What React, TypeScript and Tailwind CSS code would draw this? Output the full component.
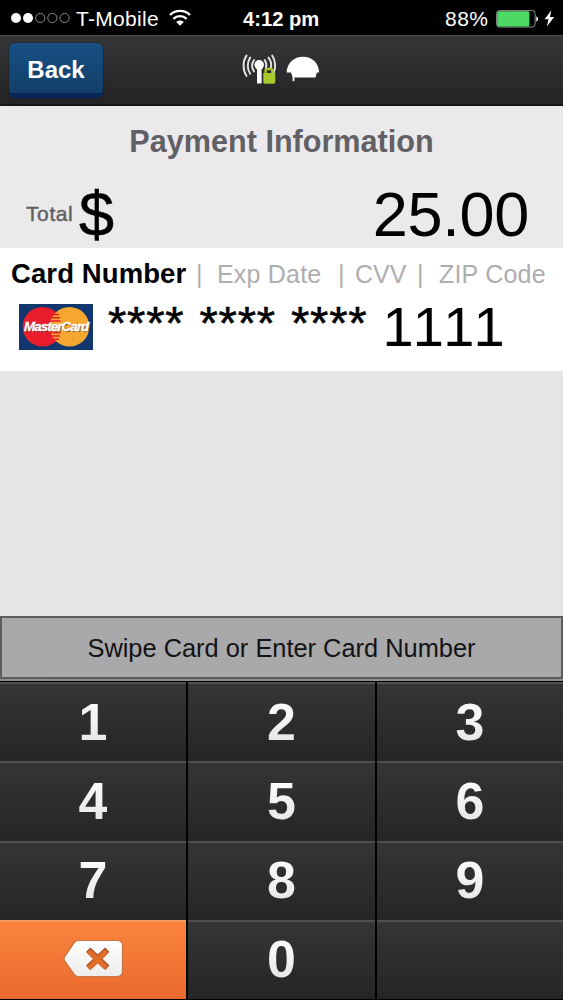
import type { ReactNode } from "react";

type Key = { id: string; label?: string; kind: "digit" | "delete" | "blank" };

const ROWS: Key[][] = [
  [
    { id: "1", label: "1", kind: "digit" },
    { id: "2", label: "2", kind: "digit" },
    { id: "3", label: "3", kind: "digit" },
  ],
  [
    { id: "4", label: "4", kind: "digit" },
    { id: "5", label: "5", kind: "digit" },
    { id: "6", label: "6", kind: "digit" },
  ],
  [
    { id: "7", label: "7", kind: "digit" },
    { id: "8", label: "8", kind: "digit" },
    { id: "9", label: "9", kind: "digit" },
  ],
  [
    { id: "del", kind: "delete" },
    { id: "0", label: "0", kind: "digit" },
    { id: "blank", kind: "blank" },
  ],
];

// ── Icons ─────────────────────────────────
function SignalDots() {
  return (
    <svg width="62" height="14" viewBox="0 0 62 14" className="block">
      <circle cx="6" cy="7" r="5" fill="#fff" />
      <circle cx="18" cy="7" r="5" fill="#fff" />
      <circle cx="30.3" cy="7" r="4.6" fill="none" stroke="#8a8a8a" strokeWidth="1" />
      <circle cx="42.4" cy="7" r="4.6" fill="none" stroke="#8a8a8a" strokeWidth="1" />
      <circle cx="54.6" cy="7" r="4.6" fill="none" stroke="#8a8a8a" strokeWidth="1" />
    </svg>
  );
}

function WifiIcon() {
  return (
    <svg width="22" height="17" viewBox="0 0 22 17" className="block">
      <path d="M1 6C6.5 .6 15.5 .6 21 6" fill="none" stroke="#fff" strokeWidth="2.3" />
      <path d="M4.4 9.9C8 6.3 14 6.3 17.6 9.9" fill="none" stroke="#fff" strokeWidth="2.3" />
      <path d="M7.2 12.9C9.2 10.9 12.8 10.9 14.8 12.9L11 16.7Z" fill="#fff" />
    </svg>
  );
}

function BatteryIcon() {
  return (
    <svg width="44" height="18" viewBox="0 0 44 18" className="block">
      <rect x=".6" y=".6" width="38.5" height="16.4" rx="2.8" fill="none" stroke="#8f8f8f" strokeWidth="1" />
      <rect x="1.2" y="1.2" width="32.2" height="15.2" rx="1.5" fill="#4cd964" />
      <path d="M40.3 6.4C42.6 6.6 42.6 11.2 40.3 11.4Z" fill="#fff" />
    </svg>
  );
}

function BoltIcon() {
  return (
    <svg width="11" height="17" viewBox="0 0 11 17" className="block">
      <path d="M7.3 .3L.6 9.3H4.6L2.8 16.6L10.2 7H6Z" fill="#fff" />
    </svg>
  );
}

function SecureSignalIcon() {
  return (
    <svg width="36" height="32" viewBox="0 0 36 32" className="block">
      <g fill="none" stroke="#e6e6e6" strokeWidth="1.9" strokeLinecap="round">
        <path d="M4.5 1.6C.6 7 .6 16 4.5 22" />
        <path d="M8.2 3.6C5 8.4 5 15 8.2 19.8" />
        <path d="M12 6C9.6 9.6 9.6 13.8 12 17.4" />
        <path d="M30.2 1.6C33.6 6.4 34 14 31.4 19.6" />
        <path d="M26.5 3.6C29.3 7.6 29.7 11.6 28.6 14" />
        <path d="M22.7 6C24.4 8.6 24.7 11.6 24 14" />
      </g>
      <circle cx="17.2" cy="10.8" r="4.8" fill="#fff" />
      <rect x="15" y="12" width="4.6" height="17.5" rx=".6" fill="#fff" />
      <path
        d="M23.6 20V16.5Q23.6 15 25.1 15H28.9Q30.4 15 30.4 16.5V20"
        fill="none"
        stroke="#a9c92e"
        strokeWidth="2.4"
      />
      <path d="M21.3 19H33.3V28Q33.3 29.8 31.5 29.8H23.1Q21.3 29.8 21.3 28Z" fill="#a9c92e" />
    </svg>
  );
}

function ReaderIcon() {
  return (
    <svg width="34" height="27" viewBox="0 0 34 27" className="block">
      <path
        d="M.6 16.5C1.100 7 8 .8 17 .8S32.800 7 33.200 16.500H30.800L29.600 21.400H8.400V25.300H6.600V21.200L5 16.500Z"
        fill="#fff"
      />
    </svg>
  );
}

function MasterCardLogo() {
  return (
    <div className="relative h-[46px] w-[74px]">
      <svg width="74" height="46" viewBox="0 0 74 46" className="block">
        <rect width="74" height="46" fill="#12376f" />
        <circle cx="23.5" cy="22.8" r="19.8" fill="#ea1d2c" />
        <circle cx="50.5" cy="22.8" r="19.8" fill="#f6a72f" />
        <path
          d="M33.500 10.500H40M32.500 13.700H41M31.500 16.900H41.500M31 28.800H41.500M32 32H41M34 35.200H40"
          stroke="#ea1d2c"
          strokeWidth="1.5"
        />
      </svg>
      <span className="absolute left-[5px] top-[15px] whitespace-nowrap text-[13.5px] font-bold italic leading-[16px] tracking-[-1px] text-white [-webkit-text-stroke:0.3px_#fff] [text-shadow:1px_1px_0_#4a203099]">
        MasterCard
      </span>
    </div>
  );
}

function DeleteIcon() {
  return (
    <svg width="62" height="42" viewBox="0 0 62 42" className="block">
      <defs>
        <linearGradient id="del" x1="0" y1="0" x2="0" y2="1">
          <stop offset="0" stopColor="#fff" />
          <stop offset="1" stopColor="#ececec" />
        </linearGradient>
      </defs>
      <path
        d="M16.5 2.5H55Q60.500 2.500 60.500 8V33Q60.500 38.500 55 38.500H16.500Q14 38.500 12.400 36.500L2.600 22.600Q1.400 20.800 2.600 19L12.400 4.500Q14 2.500 16.500 2.500Z"
        fill="url(#del)"
        stroke="#b5622f"
        strokeOpacity=".75"
        strokeWidth="1.2"
      />
      <path d="M28.4 13.8L43 27.6M43 13.8L28.4 27.6" stroke="#a8501e" strokeWidth="6.2" strokeLinecap="square" />
      <path d="M28.4 14.8L43 28.6M43 14.8L28.4 28.6" stroke="#e06c2c" strokeWidth="5.4" strokeLinecap="round" />
    </svg>
  );
}

// ── Sections ──────────────────────────────
function StatusBar() {
  return (
    <div className="flex h-[35px] items-start bg-black leading-none text-white">
      <div className="ml-[10px] mt-[11px]">
        <SignalDots />
      </div>
      <span className="ml-[4px] mt-[8px] w-[93px] text-[21px] tracking-[0.3px]">T-Mobile</span>
      <div className="mt-[9px]">
        <WifiIcon />
      </div>
      <span className="ml-[52px] mt-[9px] w-[202px] text-[20.2px] font-bold">4:12 pm</span>
      <span className="mt-[8px] w-[51px] text-[21px] tracking-[0.5px]">88%</span>
      <div className="mt-[10px]">
        <BatteryIcon />
      </div>
      <div className="ml-[4px] mt-[10px]">
        <BoltIcon />
      </div>
    </div>
  );
}

function NavBar() {
  return (
    <div className="flex h-[71px] items-start border-t border-b-2 border-t-[#4c4a4d] border-b-[#151416] bg-linear-to-b from-[#363537] to-[#242325]">
      <button className="ml-[9px] mt-[7px] flex h-[55px] w-[94px] justify-center rounded-[6px] border-b-[5px] border-[#07265a] bg-linear-to-b from-[#174f85] to-[#123f68] pt-[15px] text-[24px] font-bold leading-none text-white shadow-[0_0_2px_#101012]">
        Back
      </button>
      <div className="ml-[139px] mt-[18px]">
        <SecureSignalIcon />
      </div>
      <div className="ml-[8px] mt-[20px]">
        <ReaderIcon />
      </div>
    </div>
  );
}

function Total() {
  return (
    <div className="h-[142px] pt-[20px] leading-none">
      <h1 className="text-center text-[30.6px] font-bold leading-[31px] text-[#616064]">Payment Information</h1>
      <div className="mt-[26px] flex items-start text-black">
        <span className="ml-[26px] mt-[20px] w-[53px] text-[21px] tracking-[0.6px] text-[#5e5d60] [-webkit-text-stroke:0.4px_#5e5d60]">
          Total
        </span>
        <span className="text-[63px] [-webkit-text-stroke:0.5px_#000]">$</span>
        <span className="ml-auto mr-[34px] text-[63px] tracking-[-0.3px]">25.00</span>
      </div>
    </div>
  );
}

function Tab({ className, children }: { className: string; children: ReactNode }) {
  return <span className={"whitespace-nowrap text-[25px] text-[#aeadb0] " + className}>{children}</span>;
}

function Group({ children }: { children: ReactNode }) {
  return (
    <span className="w-[91.5px] text-[47px] tracking-[0.8px] [-webkit-text-stroke:0.6px_#000]">
      {children}
    </span>
  );
}

function CardEntry() {
  return (
    <div className="h-[123px] bg-white leading-none">
      <div className="flex items-baseline pt-[12px]">
        <span className="ml-[11px] w-[185px] whitespace-nowrap text-[27.5px] font-bold tracking-[0.1px] text-black">
          Card Number
        </span>
        <Tab className="w-[21px]">|</Tab>
        <Tab className="w-[121px] tracking-[0.2px]">Exp Date</Tab>
        <Tab className="w-[17px]">|</Tab>
        <Tab className="w-[62px]">CVV</Tab>
        <Tab className="w-[22px]">|</Tab>
        <Tab className="tracking-[0.2px]">ZIP Code</Tab>
      </div>
      <div className="mt-[11px] flex items-start text-black">
        <div className="ml-[19px] mt-[5px]">
          <MasterCardLogo />
        </div>
        <div className="ml-[15px] flex">
          <Group>****</Group>
          <Group>****</Group>
          <Group>****</Group>
        </div>
        <span className="text-[56px] tracking-[-0.8px] [font-kerning:none]">1111</span>
      </div>
    </div>
  );
}

function Keypad() {
  return (
    <div className="flex h-[319px] flex-col border-y border-black bg-black">
      {ROWS.map((row) => (
        <div key={row[0].id} className="grid flex-1 grid-cols-[186px_187px_1fr] gap-x-[2px]">
          {row.map((key) => (
            <button
              key={key.id}
              className={
                "flex items-center justify-center border-t-2 pb-[2px] text-[52px] font-bold leading-none " +
                (key.kind === "delete"
                  ? "border-[#f79a5d] bg-linear-to-b from-[#fa833d] to-[#ea6a2d]"
                  : "border-[#504f52] bg-linear-to-b from-[#353436] to-[#252426]")
              }
            >
              {key.kind === "delete" ? (
                <DeleteIcon />
              ) : (
                <span className="bg-linear-to-b from-white to-[#e4e2e6] bg-clip-text text-transparent">
                  {key.label}
                </span>
              )}
            </button>
          ))}
        </div>
      ))}
    </div>
  );
}

export default function App() {
  return (
    <div className="flex h-[1000px] w-[563px] flex-col overflow-hidden bg-linear-to-r from-[#e9ece8] to-[#ebe9ec] to-[48px] font-['Liberation_Sans',Arial,sans-serif]">
      <StatusBar />
      <NavBar />
      <Total />
      <CardEntry />
      <div className="flex-1 bg-linear-to-r from-[#e5e7e4] to-[#e6e4e7] to-[48px]" />
      <div className="flex h-[63px] justify-center border-2 border-[#5d5c5f] bg-linear-to-r from-[#a7a9a7] to-[#a9a8ab] to-[48px] pt-[18px] text-[25.4px] leading-none text-[#131214]">
        Swipe Card or Enter Card Number
      </div>
      <div className="h-[2px] bg-[#8d8c8f]" />
      <Keypad />
    </div>
  );
}
